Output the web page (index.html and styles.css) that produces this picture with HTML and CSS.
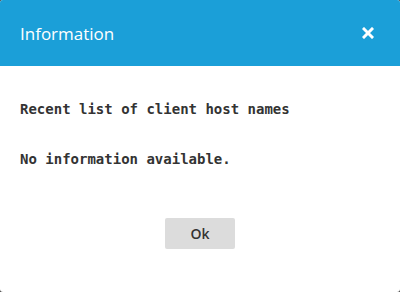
FILE: index.html
```html
<!DOCTYPE html>
<html lang="en">
<head>
    <meta charset="UTF-8">
    <meta name="viewport" content="width=device-width, initial-scale=1.0">
    <title>Information</title>
    <link rel="stylesheet" href="styles.css">
</head>
<body>
    <div class="dialog">
        <div class="dialog-header">
            <h1>Information</h1>
            <button class="close" title="Close">
                <svg width="12" height="12" viewBox="0 0 12 12">
                    <path d="M2 2 L10 10 M10 2 L2 10" stroke="#fff" stroke-width="3" stroke-linecap="square"/>
                </svg>
            </button>
        </div>
        <div class="dialog-body">
            <p class="mono">Recent list of client host names</p>
            <p class="mono">No information available.</p>
        </div>
        <div class="dialog-footer">
            <button class="ok">Ok</button>
        </div>
    </div>
</body>
</html>
```

FILE: styles.css
```css
html, body {
    margin: 0;
    height: 100%;
}
body {
    background-color: #4a4a4a;
    font-family: "Open Sans", Arial, sans-serif;
}
.dialog {
    height: 100%;
    background-color: white;
    border-radius: 3px;
    overflow: hidden;
    display: flex;
    flex-direction: column;
}
.dialog-header {
    height: 66px;
    background-color: #1b9fd8;
    display: flex;
    align-items: center;
    justify-content: space-between;
    padding: 0 20px;
}
.dialog-header h1 {
    margin: 0;
    color: white;
    font-weight: normal;
    font-size: 17px;
}
.close {
    background: none;
    border: none;
    padding: 0;
    margin-right: 6px;
    width: 12px;
    height: 12px;
    display: flex;
    cursor: pointer;
}
.dialog-body {
    padding: 35px 20px 0;
}
.mono {
    font-family: "DejaVu Sans Mono", monospace;
    font-weight: bold;
    font-size: 14px;
    color: #333;
    margin: 0 0 34px;
    line-height: 16px;
}
.dialog-footer {
    display: flex;
    justify-content: center;
    padding-top: 17px;
}
.ok {
    width: 70px;
    height: 31px;
    background-color: #dcdcdc;
    border: none;
    border-radius: 2px;
    font-family: "Open Sans", Arial, sans-serif;
    font-size: 14px;
    font-weight: 600;
    color: #333;
    cursor: pointer;
}
```
